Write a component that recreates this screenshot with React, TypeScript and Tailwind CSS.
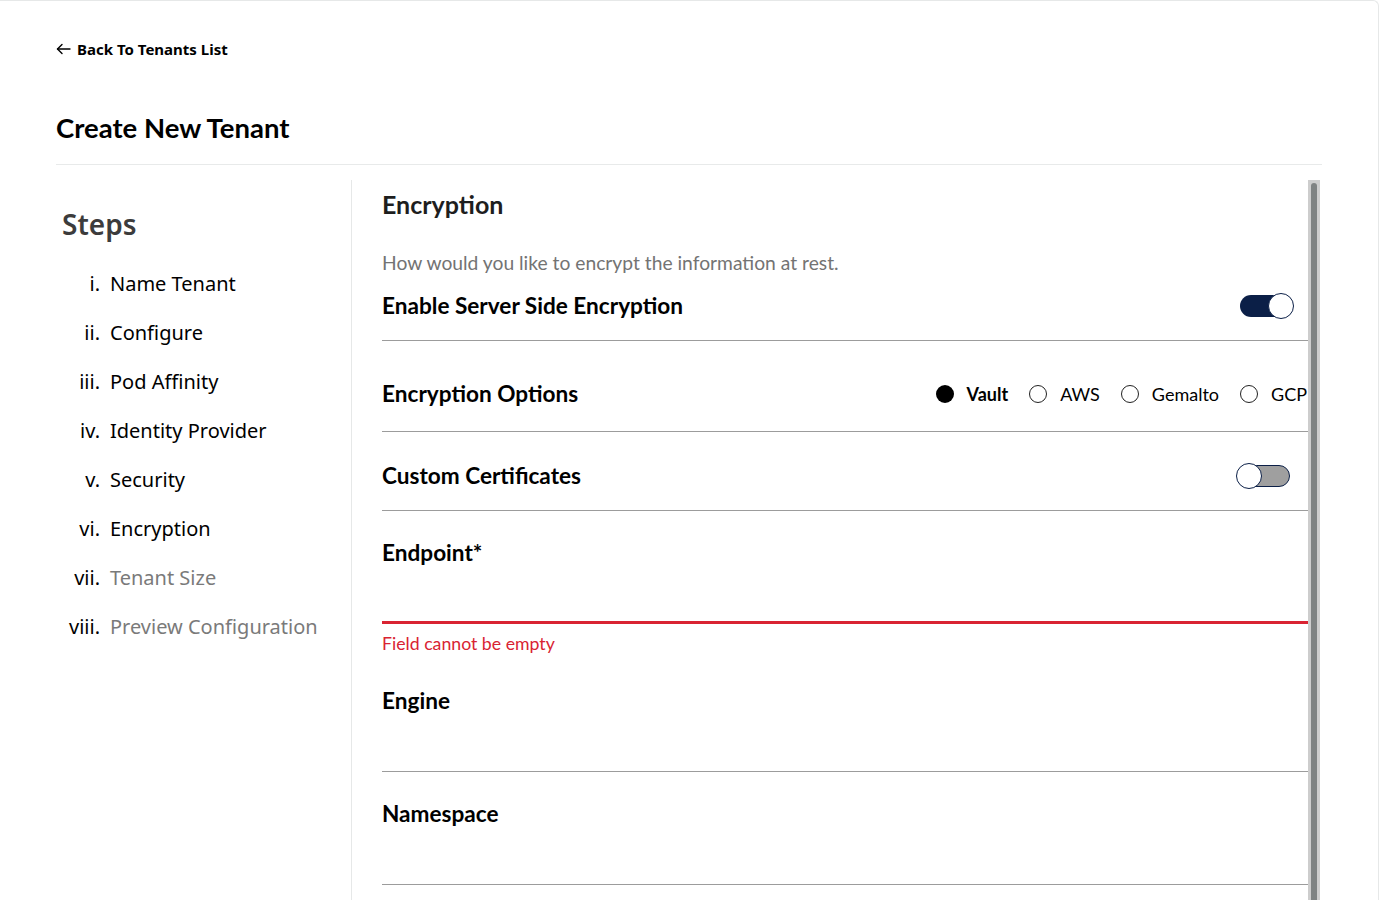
import React from "react";

const steps = [
  { num: "i.", label: "Name Tenant", done: true },
  { num: "ii.", label: "Configure", done: true },
  { num: "iii.", label: "Pod Affinity", done: true },
  { num: "iv.", label: "Identity Provider", done: true },
  { num: "v.", label: "Security", done: true },
  { num: "vi.", label: "Encryption", done: true },
  { num: "vii.", label: "Tenant Size", done: false },
  { num: "viii.", label: "Preview Configuration", done: false },
];

const lato = "font-['Lato','Liberation_Sans',sans-serif]";
const noto = "font-['Noto_Sans','Liberation_Sans',sans-serif]";

function Toggle({ on }: { on: boolean }) {
  return (
    <div className="relative w-[54px] h-[26px]">
      <div
        className={
          on
            ? "absolute left-0 right-[1px] top-[2px] h-[22px] rounded-full bg-[#0b1f47]"
            : "absolute left-[3px] right-0 top-[2px] h-[22px] rounded-full bg-[#9f9f9f] border border-[#0b1f47]"
        }
      />
      <div
        className={
          "absolute top-0 w-[26px] h-[26px] rounded-full bg-white border border-[#0b1f47] " +
          (on ? "right-0" : "left-0")
        }
      />
    </div>
  );
}

function Radio({ label, checked }: { label: string; checked?: boolean }) {
  return (
    <label className="flex items-center gap-[13px]">
      {checked ? (
        <span className="w-[18px] h-[18px] rounded-full bg-black" />
      ) : (
        <span className="w-[18px] h-[18px] rounded-full border-[1.5px] border-[#222]" />
      )}
      <span className={"text-[18px] text-black " + (checked ? "font-bold" : "font-normal")}>{label}</span>
    </label>
  );
}

export default function App() {
  return (
    <div className="w-[1380px] h-[900px] bg-white overflow-hidden">
      <div className="w-[1379px] h-[900px] border-t border-r border-[#e6e8e8] rounded-tr-[6px] px-14 overflow-hidden">
        {/* Back link */}
        <div className={"mt-[38px] h-[20px] flex items-center gap-[6px] text-[15px] font-bold text-black " + noto}>
          <svg width="15" height="12" viewBox="0 0 15 12" fill="none" stroke="black" strokeWidth="1.4" strokeLinecap="round" strokeLinejoin="round">
            <path d="M14 6H1.5" />
            <path d="M6 1.5L1.5 6L6 10.5" />
          </svg>
          <span>Back To Tenants List</span>
        </div>

        <h1 className={"mt-[52px] h-[34px] leading-[34px] text-[27.5px] font-bold text-black " + lato}>Create New Tenant</h1>

        <div className="mt-[19px] border-t border-[#e8eaea]" />

        <div className="mt-[15px] flex h-[740px]">
          {/* Steps column */}
          <div className={"w-[296px] border-r border-[#e6e8e8] " + noto}>
            <div className="pl-[6px] pt-[24px] h-[64px] leading-[40px] text-[28px] font-semibold text-[#3c3c3c]">Steps</div>
            <ul className="mt-[15px]">
              {steps.map((s) => (
                <li key={s.num} className="h-[49px] flex items-center text-[20px]">
                  <span className="w-[44px] text-right mr-[10px] text-black">{s.num}</span>
                  <span className={s.done ? "text-black" : "text-[#7a7a7a]"}>{s.label}</span>
                </li>
              ))}
            </ul>
          </div>

          {/* Form */}
          <div className="flex-1 flex pl-[30px] pr-[2px]">
            <div className={"flex-1 " + lato}>
              <h2 className="pt-[9px] h-[40px] leading-[30px] text-[25px] font-bold text-[#1e1e1e]">Encryption</h2>
              <p className="mt-[31px] h-[24px] leading-[24px] text-[19.25px] text-[#737373]">
                How would you like to encrypt the information at rest.
              </p>

              <div className="mt-[17px] pb-[20px] border-b border-[#9c9c9c]">
                <div className="h-[28px] flex items-center justify-between">
                  <span className="text-[22.6px] font-bold text-black">Enable Server Side Encryption</span>
                  <div className="mr-[14px]">
                    <Toggle on />
                  </div>
                </div>
              </div>

              <div className="pt-[39px] pb-[23px] border-b border-[#9c9c9c]">
                <div className="h-[28px] flex items-center justify-between">
                  <span className="text-[22.6px] font-bold text-black">Encryption Options</span>
                  <div className="flex items-center gap-[21px] mr-[1px]">
                    <Radio label="Vault" checked />
                    <Radio label="AWS" />
                    <Radio label="Gemalto" />
                    <Radio label="GCP" />
                  </div>
                </div>
              </div>

              <div className="pt-[30px] pb-[20px] border-b border-[#9c9c9c]">
                <div className="h-[28px] flex items-center justify-between">
                  <span className="text-[22.6px] font-bold text-black">Custom Certificates</span>
                  <div className="mr-[18px]">
                    <Toggle on={false} />
                  </div>
                </div>
              </div>

              {/* Endpoint */}
              <div className="pt-[28px]">
                <div className="h-[28px] leading-[28px] text-[22.6px] font-bold text-black">Endpoint*</div>
                <div className="h-[57px] border-b-[3px] border-[#d92332]" />
                <div className="mt-[9px] h-[22px] leading-[22px] text-[17.7px] text-[#d92332]">Field cannot be empty</div>
              </div>

              {/* Engine */}
              <div className="pt-[32px]">
                <div className="h-[28px] leading-[28px] text-[22.6px] font-bold text-black">Engine</div>
                <div className="h-[57px] border-b border-[#9c9c9c]" />
              </div>

              {/* Namespace */}
              <div className="pt-[28px]">
                <div className="h-[28px] leading-[28px] text-[22.6px] font-bold text-black">Namespace</div>
                <div className="h-[57px] border-b border-[#9c9c9c]" />
              </div>
            </div>

            {/* scrollbar */}
            <div className="w-[12px] bg-[#cdcdcd] flex justify-center pt-[3px]">
              <div className="w-[6px] h-full bg-[#7f8383] rounded-t-[3px]" />
            </div>
          </div>
        </div>
      </div>
    </div>
  );
}
